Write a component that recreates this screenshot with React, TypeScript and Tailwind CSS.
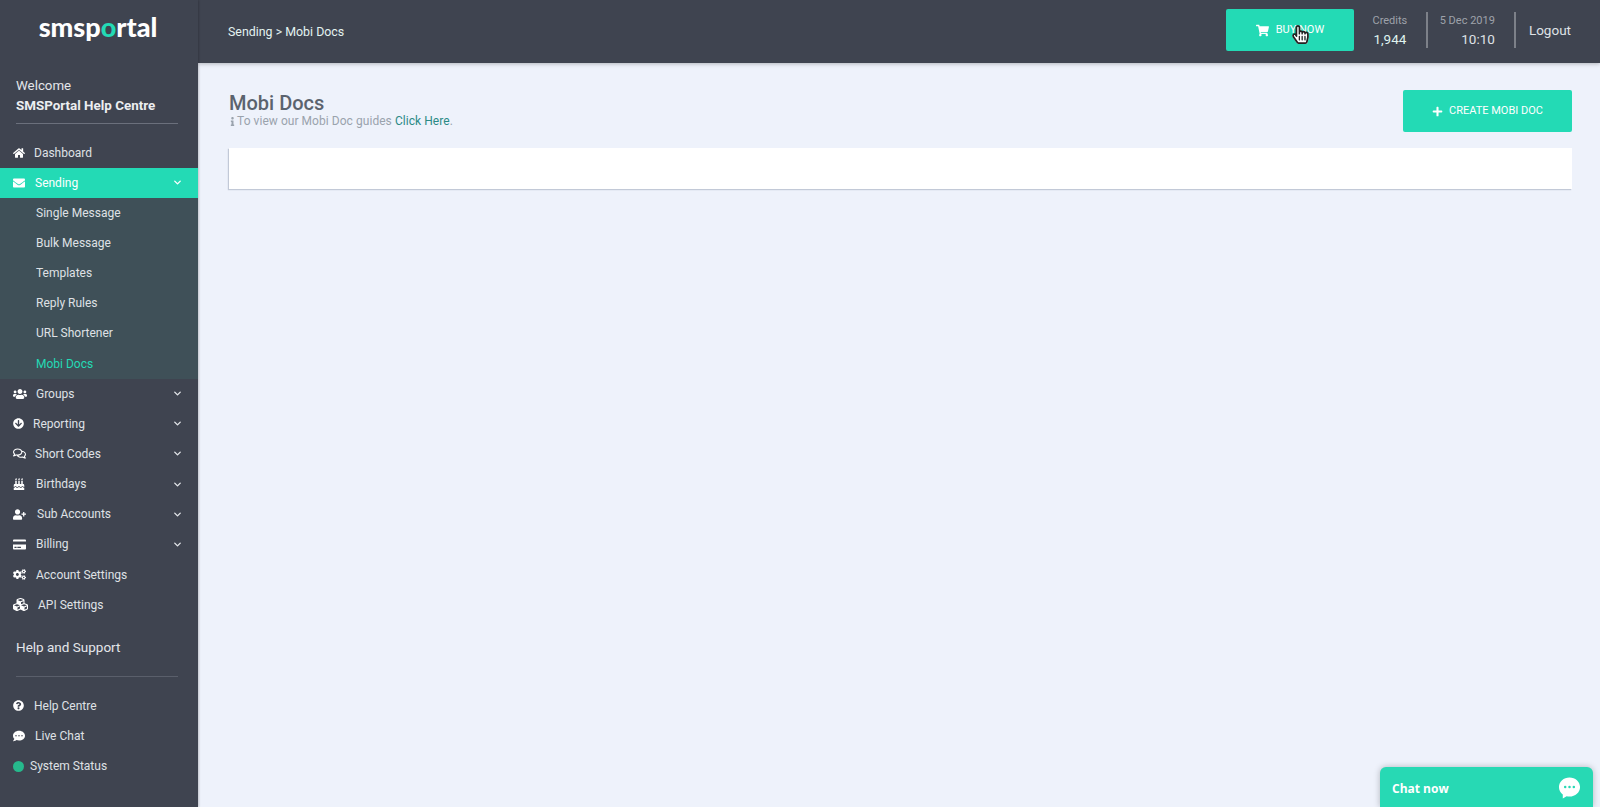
import type { ReactNode } from 'react'
import {
  FaHome,
  FaEnvelope,
  FaUsers,
  FaArrowCircleDown,
  FaRegComments,
  FaBirthdayCake,
  FaUserPlus,
  FaCreditCard,
  FaCogs,
  FaCubes,
  FaQuestionCircle,
  FaCommentDots,
  FaShoppingCart,
  FaPlus,
  FaInfo,
  FaHandPointer,
  FaRegHandPointer,
} from 'react-icons/fa'
import { LuChevronDown } from 'react-icons/lu'

type NavRow = { label: string; icon: ReactNode; gap: string; chevron?: boolean }

const subItems = ['Single Message', 'Bulk Message', 'Templates', 'Reply Rules', 'URL Shortener']

const navRows: NavRow[] = [
  { label: 'Groups', icon: <FaUsers size={14} />, gap: 'gap-[9px]', chevron: true },
  { label: 'Reporting', icon: <FaArrowCircleDown size={11} />, gap: 'gap-[9px]', chevron: true },
  { label: 'Short Codes', icon: <FaRegComments size={13} />, gap: 'gap-[9px]', chevron: true },
  { label: 'Birthdays', icon: <FaBirthdayCake size={12} />, gap: 'gap-[11px]', chevron: true },
  { label: 'Sub Accounts', icon: <FaUserPlus size={13} />, gap: 'gap-[11px]', chevron: true },
  { label: 'Billing', icon: <FaCreditCard size={13} />, gap: 'gap-[10px]', chevron: true },
  { label: 'Account Settings', icon: <FaCogs size={13} />, gap: 'gap-[10px]' },
  { label: 'API Settings', icon: <FaCubes size={15} />, gap: 'gap-[10px]' },
]

function Row({ row }: { row: NavRow }) {
  return (
    <div className={`flex h-[30.15px] items-center pl-[13px] pr-[15px] text-[12px] text-[#dfe1e5] ${row.gap}`}>
      <span className="flex text-white">{row.icon}</span>
      <span className="flex-1">{row.label}</span>
      {row.chevron && <LuChevronDown size={11} strokeWidth={3} className="text-[#e4e6ea]" />}
    </div>
  )
}

function Sidebar() {
  return (
    <aside className="z-20 flex w-[198px] shrink-0 flex-col bg-[#3f4450] shadow-[1px_0_2px_rgba(0,0,0,0.2)]">
      <div className="flex h-[63px] items-start justify-center pr-[2px] pt-[8px]">
        <span className="font-['Lato',sans-serif] text-[27px] font-black leading-[38px] text-white">
          smsp<span className="text-[#23dab5]">o</span>rtal
        </span>
      </div>
      <div className="pl-[16px] pr-[20px] pt-[13px]">
        <p className="text-[13.300px] leading-[20px] text-[#e4e6ea]">Welcome</p>
        <p className="text-[13.400px] font-bold leading-[19px] text-[#eceef1]">SMSPortal Help Centre</p>
        <div className="mt-[8px] h-px bg-[#6b707c]" />
      </div>
      <nav className="mt-[13.500px]">
        <div className="flex h-[30.15px] items-center gap-[9px] pl-[13px] pr-[15px] text-[12px] text-[#dfe1e5]">
          <FaHome size={12} className="text-white" />
          <span>Dashboard</span>
        </div>
        <div className="flex h-[30.15px] items-center gap-[10px] bg-[#23dab5] pl-[13px] pr-[15px] text-[12px] text-white">
          <FaEnvelope size={12} />
          <span className="flex-1">Sending</span>
          <LuChevronDown size={11} strokeWidth={3} />
        </div>
        <div className="bg-[#3f5058]">
          {subItems.map(item => (
            <div key={item} className="flex h-[30.15px] items-center pl-9 text-[12px] text-[#dfe1e5]">
              {item}
            </div>
          ))}
          <div className="flex h-[30.15px] items-center pl-9 text-[12px] text-[#23dab5]">Mobi Docs</div>
        </div>
        {navRows.map(row => (
          <Row key={row.label} row={row} />
        ))}
      </nav>
      <div className="pl-[16px] pr-[20px] pt-[17px]">
        <p className="text-[13.500px] leading-[20px] text-[#e4e6ea]">Help and Support</p>
        <div className="mt-[19px] h-px bg-[#5a5f6b]" />
      </div>
      <div className="mt-[14px]">
        <Row row={{ label: 'Help Centre', icon: <FaQuestionCircle size={11} />, gap: 'gap-[10px]' }} />
        <Row row={{ label: 'Live Chat', icon: <FaCommentDots size={12} />, gap: 'gap-[10px]' }} />
        <div className="flex h-[30.15px] items-center gap-[6px] pl-[13px] text-[12px] text-[#dfe1e5]">
          <span className="h-[11px] w-[11px] rounded-full bg-[#26b98c]" />
          <span>System Status</span>
        </div>
      </div>
    </aside>
  )
}

function Header() {
  return (
    <header className="z-10 flex h-[63px] shrink-0 items-center bg-[#3f4450] pl-[30px] shadow-[0_1px_4px_rgba(0,0,0,0.25)]">
      <span className="flex-1 pt-[1px] text-[12.400px] text-[#e4f3f0]">Sending &gt; Mobi Docs</span>
      <button className="relative mb-[3px] flex h-[42px] w-[128px] items-center justify-center gap-[7px] rounded-[2px] bg-[#23dab5] text-[11px] text-white">
        <FaShoppingCart size={13} />
        <span>BUY NOW</span>
        <span className="absolute left-[65px] top-[16px] text-white">
          <FaHandPointer size={19} />
          <FaRegHandPointer size={19} className="absolute left-0 top-0 text-[#222]" />
        </span>
      </button>
      <div className="mb-[1px] ml-[19px] flex w-[34px] flex-col items-center">
        <span className="text-[11px] leading-[16px] text-[#9ea2aa]">Credits</span>
        <span className="text-[13.500px] leading-[20px] text-[#dff3ef]">1,944</span>
      </div>
      <div className="mb-[3px] ml-[19px] h-[36px] w-[2px] bg-[#7d8189]" />
      <div className="mb-[1px] ml-[14px] flex w-[53px] flex-col items-end whitespace-nowrap">
        <span className="text-[11px] leading-[16px] text-[#9ea2aa]">5 Dec 2019</span>
        <span className="text-[13.500px] leading-[20px] text-[#dfe2e6]">10:10</span>
      </div>
      <div className="mb-[3px] ml-[19px] h-[36px] w-[2px] bg-[#7d8189]" />
      <span className="mb-[3px] ml-[13px] mr-[29px] text-[13.500px] text-[#dfe2e6]">Logout</span>
    </header>
  )
}

export default function App() {
  return (
    <div className="relative flex h-[807px] w-[1600px] overflow-hidden bg-[#eef2fb] font-['Roboto',sans-serif]">
      <Sidebar />
      <div className="flex flex-1 flex-col">
        <Header />
        <main className="pl-[31px] pr-[28px] pt-[26px]">
          <div className="flex items-start justify-between">
            <div className="pt-[2px]">
              <h1 className="text-[20px] font-medium leading-[24px] text-[#5b636e]">Mobi Docs</h1>
              <p className="flex items-center text-[12px] leading-[12px] tracking-[0.05px] text-[#9aa3ad]">
                <FaInfo size={9} className="-ml-[1px]" />
                To view our Mobi Doc guides&nbsp;<span className="text-[#2b8a86]">Click Here</span>.
              </p>
            </div>
            <button className="mt-[1px] flex h-[42px] w-[169px] items-center justify-center gap-[6px] rounded-[2px] bg-[#23dab5] text-[11px] text-white">
              <FaPlus size={11} />
              <span>CREATE MOBI DOC</span>
            </button>
          </div>
          <div className="mt-[16px] h-[41px] bg-white shadow-[-1px_1px_1px_rgba(150,160,180,0.5)]" />
        </main>
      </div>
      <div className="absolute left-[1380px] top-[767px] flex h-[40px] w-[213px] items-center justify-between rounded-t-[6px] bg-[#27d9b4] pl-[12px] pr-[12px] font-['Open_Sans',sans-serif] shadow-[0_0_6px_rgba(0,0,0,0.25)]">
        <span className="pt-[3px] text-[12px] font-bold text-white">Chat now</span>
        <svg width="23" height="23" viewBox="0 0 24 24" className="mt-[1px]">
          <path d="M12 1.5c6 0 11 4.4 11 10s-5 10-11 10c-1 0-2-.1-3-.4L5 23.5v-4.2C2.500 17.400 1 14.600 1 11.500c0-5.600 5-10 11-10z" fill="#fff" />
          <circle cx="7.500" cy="11.500" r="1.300" fill="#27d9b4" />
          <circle cx="12" cy="11.500" r="1.300" fill="#27d9b4" />
          <circle cx="16.500" cy="11.500" r="1.300" fill="#27d9b4" />
        </svg>
      </div>
    </div>
  )
}
